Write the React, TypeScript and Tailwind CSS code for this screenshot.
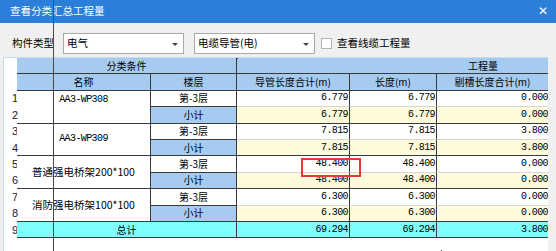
import React from "react";

const CJK = { fontFamily: '"Microsoft YaHei", "Noto Sans CJK SC", "Noto Sans", sans-serif' };
const MONO = { fontFamily: '"Liberation Mono", "DejaVu Sans Mono", monospace', letterSpacing: "-0.6px" };

type Row = {
  n: number;
  name?: string;
  floor: string;
  a: string;
  b: string;
  c: string;
  sub: boolean;
};

const rows: Row[] = [
  { n: 1, name: "AA3-WP308", floor: "第-3层", a: "6.779", b: "6.779", c: "0.000", sub: false },
  { n: 2, floor: "小计", a: "6.779", b: "6.779", c: "0.000", sub: true },
  { n: 3, name: "AA3-WP309", floor: "第-3层", a: "7.815", b: "7.815", c: "3.800", sub: false },
  { n: 4, floor: "小计", a: "7.815", b: "7.815", c: "3.800", sub: true },
  { n: 5, name: "普通强电桥架200*100", floor: "第-3层", a: "48.400", b: "48.400", c: "0.000", sub: false },
  { n: 6, floor: "小计", a: "48.400", b: "48.400", c: "0.000", sub: true },
  { n: 7, name: "消防强电桥架100*100", floor: "第-3层", a: "6.300", b: "6.300", c: "0.000", sub: false },
  { n: 8, floor: "小计", a: "6.300", b: "6.300", c: "0.000", sub: true },
];

function Num({ v, cls, last }: { v: string; cls: string; last?: boolean }) {
  return (
    <div
      className={`flex items-center justify-end text-[10px] text-black ${last ? "pr-0" : "pr-[1px] border-r border-r-[#3a3a3a]"} ${cls}`}
      style={MONO}
    >
      {v}
    </div>
  );
}

export default function App() {
  return (
    <div className="relative w-[556px] h-[251px] overflow-hidden bg-[#f0f0f0] text-black" style={CJK}>
      {/* title bar */}
      <div className="h-[23px] bg-[#2b7fd9] flex items-center justify-between pl-[10px] pr-[8px] text-white text-[10.5px]">
        <span className="pb-[2px]">查看分类汇总工程量</span>
        <span className="text-[12px] font-bold leading-none pb-[2px]" style={{ fontFamily: '"DejaVu Sans", sans-serif' }}>✕</span>
      </div>

      {/* toolbar */}
      <div className="flex items-center h-[22px] mt-[9px] text-[10.5px]">
        <span className="ml-[12px] w-[51px]">构件类型</span>
        <div className="relative w-[121px] h-[21px] bg-white border border-[#a9a9a9] flex items-center pl-[3px]">
          电气
          <span className="absolute right-[5px] top-[9px] w-0 h-0 border-l-[3px] border-r-[3px] border-t-[3px] border-l-transparent border-r-transparent border-t-[#444]" />
        </div>
        <div className="relative ml-[10px] w-[121px] h-[21px] bg-white border border-[#a9a9a9] flex items-center pl-[3px]">
          电缆导管(电)
          <span className="absolute right-[5px] top-[9px] w-0 h-0 border-l-[3px] border-r-[3px] border-t-[3px] border-l-transparent border-r-transparent border-t-[#444]" />
        </div>
        <div className="ml-[6px] w-[11px] h-[11px] bg-white border border-[#b4b4b4]" />
        <span className="ml-[5px]">查看线缆工程量</span>
      </div>

      {/* table */}
      <div className="mt-[3px] ml-[3px] w-[545px] h-[200px] bg-white border-t border-l border-[#c9dcee] overflow-hidden">
        <div className="grid grid-cols-[13px_134px_86px_113px_87px_111px] grid-rows-[repeat(11,16.4px)] text-[10px] leading-none">
          {/* header */}
          <div className="row-span-2 bg-white" />
          <div className="col-span-2 bg-[#a6cbf0] border-r border-b border-[#3a3a3a] flex items-center justify-center">分类条件</div>
          <div className="col-span-3 bg-[#a6cbf0] border-b border-[#3a3a3a] flex items-center pl-[231px]">工程量</div>
          <div className="bg-[#a6cbf0] border-r border-b border-[#3a3a3a] flex items-center justify-center">名称</div>
          <div className="bg-[#a6cbf0] border-r border-b border-[#3a3a3a] flex items-center justify-center">楼层</div>
          <div className="bg-[#a6cbf0] border-r border-b border-[#3a3a3a] flex items-center justify-center">导管长度合计(m)</div>
          <div className="bg-[#a6cbf0] border-r border-b border-[#3a3a3a] flex items-center justify-center">长度(m)</div>
          <div className="bg-[#a6cbf0] border-b border-[#3a3a3a] flex items-center justify-center">剔槽长度合计(m)</div>

          {rows.map((r) => {
            const rowBg = r.sub ? "bg-[#fdfbdb]" : "bg-white";
            const bb = r.sub ? "border-b border-b-[#3a3a3a]" : "border-b border-b-[#d6d6d6]";
            return (
              <React.Fragment key={r.n}>
                <div className="flex items-center pl-[8px] text-[11px] text-[#1a1a2e]" style={{ fontFamily: '"Liberation Sans", sans-serif' }}>
                  {r.n}
                </div>
                {r.name && (
                  <div
                    className={`row-span-2 bg-white border-r border-b border-[#3a3a3a] flex justify-center ${r.n === 1 ? "items-start pt-[4px]" : "items-center"} ${r.name.startsWith("AA3") ? "" : "text-[10.5px]"}`}
                    style={r.name.startsWith("AA3") ? MONO : undefined}
                  >
                    {r.name}
                  </div>
                )}
                <div className={`${r.sub ? "bg-[#a6cbf0]" : "bg-white"} border-r border-b border-[#3a3a3a] flex items-center justify-center`}>
                  {r.floor}
                </div>
                <Num v={r.a} cls={`${rowBg} ${bb}`} />
                <Num v={r.b} cls={`${rowBg} ${bb}`} />
                <Num v={r.c} cls={`${rowBg} ${bb}`} last />
              </React.Fragment>
            );
          })}

          {/* total */}
          <div className="flex items-center pl-[8px] text-[11px] text-[#1a1a2e]" style={{ fontFamily: '"Liberation Sans", sans-serif' }}>9</div>
          <div className="col-span-2 bg-[#80ffff] border-r border-b border-[#3a3a3a] flex items-center justify-center">总计</div>
          <Num v="69.294" cls="bg-[#80ffff] border-b border-b-[#3a3a3a]" />
          <Num v="69.294" cls="bg-[#80ffff] border-b border-b-[#3a3a3a]" />
          <Num v="3.800" cls="bg-[#80ffff] border-b border-b-[#3a3a3a]" last />
        </div>
      </div>

      {/* overlays */}
      <div className="absolute left-[53px] top-0 w-[1px] h-[251px] bg-[#4a4a4a]" />
      <div className="absolute left-[301px] top-[158px] w-[60px] h-[19px] border-2 border-[#e53935]" />
      <div className="absolute left-[237px] top-[58px] w-[1px] h-[1px] bg-[#333]" />
      <div className="absolute left-[441px] top-[250px] w-[1px] h-[1px] bg-[#333]" />
    </div>
  );
}
